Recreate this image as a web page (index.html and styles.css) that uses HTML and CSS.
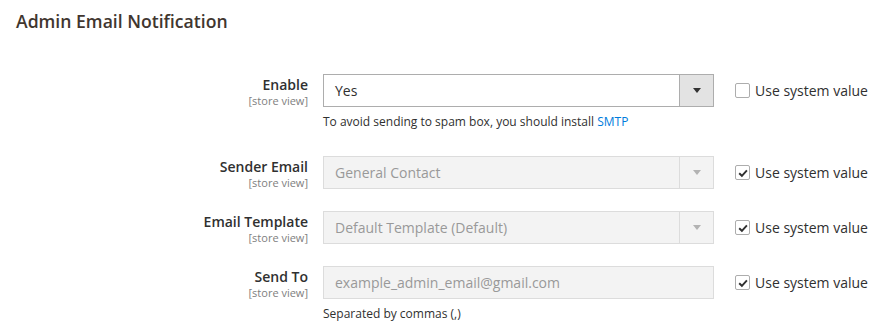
FILE: index.html
```html
<!DOCTYPE html>
<html>
<head>
    <title>Admin Email Notification</title>
    <link rel="stylesheet" href="styles.css">
</head>
<body>

<div class="section">
    <div class="section-title">Admin Email Notification</div>

    <div class="fieldset">
        <div class="field field-with-note">
            <div class="field-label">
                <span class="label-text">Enable</span>
                <span class="scope">[store view]</span>
            </div>
            <div class="field-control">
                <div class="select">
                    <span class="select-value">Yes</span>
                    <span class="select-button"><span class="arrow"></span></span>
                </div>
                <div class="note">To avoid sending to spam box, you should install <a href="#">SMTP</a></div>
            </div>
            <label class="use-default">
                <span class="checkbox"></span>
                <span>Use system value</span>
            </label>
        </div>

        <div class="field">
            <div class="field-label">
                <span class="label-text">Sender Email</span>
                <span class="scope">[store view]</span>
            </div>
            <div class="field-control">
                <div class="select disabled">
                    <span class="select-value">General Contact</span>
                    <span class="select-button"><span class="arrow"></span></span>
                </div>
            </div>
            <label class="use-default">
                <span class="checkbox checked">
                    <svg width="12" height="12" viewBox="0 0 12 12"><path d="M2.2 6.2 L4.9 8.8 L9.9 3.4" fill="none" stroke="#303030" stroke-width="1.9"/></svg>
                </span>
                <span>Use system value</span>
            </label>
        </div>

        <div class="field">
            <div class="field-label">
                <span class="label-text">Email Template</span>
                <span class="scope">[store view]</span>
            </div>
            <div class="field-control">
                <div class="select disabled">
                    <span class="select-value">Default Template (Default)</span>
                    <span class="select-button"><span class="arrow"></span></span>
                </div>
            </div>
            <label class="use-default">
                <span class="checkbox checked">
                    <svg width="12" height="12" viewBox="0 0 12 12"><path d="M2.2 6.2 L4.9 8.8 L9.9 3.4" fill="none" stroke="#303030" stroke-width="1.9"/></svg>
                </span>
                <span>Use system value</span>
            </label>
        </div>

        <div class="field">
            <div class="field-label">
                <span class="label-text">Send To</span>
                <span class="scope">[store view]</span>
            </div>
            <div class="field-control">
                <div class="input disabled">example_admin_email@gmail.com</div>
                <div class="note">Separated by commas (,)</div>
            </div>
            <label class="use-default">
                <span class="checkbox checked">
                    <svg width="12" height="12" viewBox="0 0 12 12"><path d="M2.2 6.2 L4.9 8.8 L9.9 3.4" fill="none" stroke="#303030" stroke-width="1.9"/></svg>
                </span>
                <span>Use system value</span>
            </label>
        </div>
    </div>
</div>

</body>
</html>
```

FILE: styles.css
```css
body {
    font-family: 'Open Sans', 'Liberation Sans', sans-serif;
    background-color: #fff;
    color: #303030;
    margin: 0;
    padding: 0;
}

.section {
    padding: 9px 0 0 0;
}

.section-title {
    font-size: 17.6px;
    font-weight: 600;
    color: #41362f;
    padding-left: 16px;
    line-height: 24px;
    margin-bottom: 41px;
}

.field {
    display: flex;
    align-items: flex-start;
    margin-bottom: 22px;
}

.field-with-note {
    margin-bottom: 26px;
}

.field-label {
    width: 308px;
    padding-top: 1px;
    display: flex;
    flex-direction: column;
    align-items: flex-end;
    text-align: right;
}

.label-text {
    font-size: 14px;
    font-weight: 600;
    line-height: 19px;
    color: #303030;
}

.scope {
    font-size: 11px;
    line-height: 13px;
    color: #808080;
}

.field-control {
    margin-left: 15px;
    width: 391px;
}

.select, .input {
    box-sizing: border-box;
    height: 33px;
    border: 1px solid #adadad;
    display: flex;
    align-items: center;
    font-size: 14px;
    background-color: #fff;
}

.select-value {
    flex: 1;
    padding-left: 11px;
}

.select-button {
    width: 33px;
    height: 100%;
    border-left: 1px solid #adadad;
    background-color: #e3e3e3;
    display: flex;
    align-items: center;
    justify-content: center;
}

.arrow {
    width: 0;
    height: 0;
    border-left: 4px solid transparent;
    border-right: 4px solid transparent;
    border-top: 5px solid #333;
}

.disabled {
    background-color: #f3f3f3;
    border-color: #dcdcdc;
    color: #999;
}

.disabled .select-button {
    background-color: #f3f3f3;
    border-left-color: #dcdcdc;
}

.disabled .arrow {
    border-top-color: #b3b3b3;
}

.input {
    padding-left: 11px;
}

.note {
    font-size: 12px;
    line-height: 17px;
    margin-top: 6px;
    color: #303030;
}

.note a {
    color: #007bdb;
    text-decoration: none;
}

.use-default {
    margin-left: 21px;
    display: flex;
    align-items: center;
    height: 33px;
    font-size: 14px;
    color: #303030;
}

.checkbox {
    box-sizing: border-box;
    width: 15px;
    height: 15px;
    border: 1px solid #adadad;
    border-radius: 2px;
    background-color: #fff;
    margin-right: 5px;
    display: flex;
    align-items: center;
    justify-content: center;
}
```
